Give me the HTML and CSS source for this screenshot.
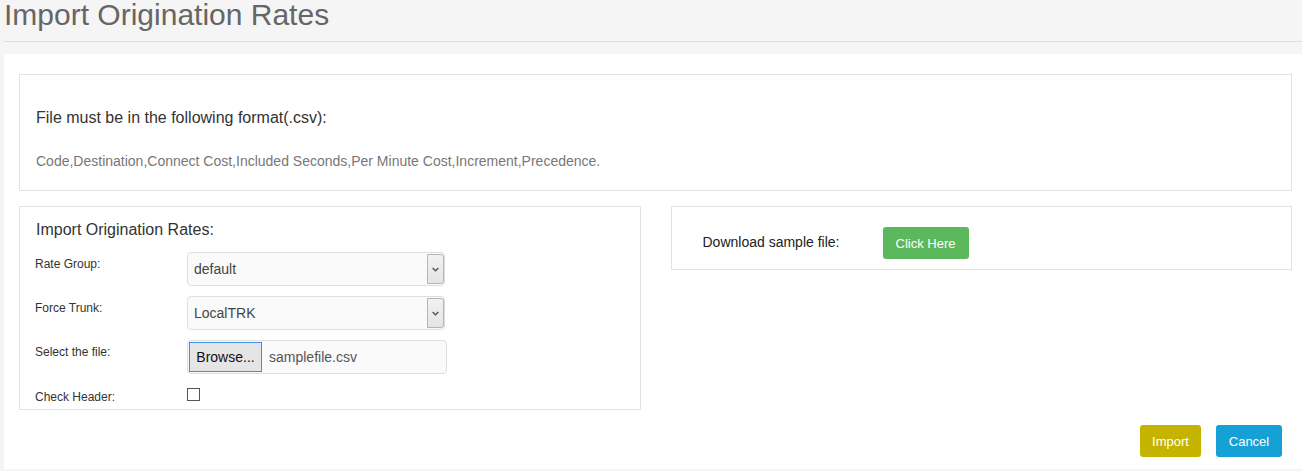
FILE: index.html
```html
<!DOCTYPE html>
<html>
<head>
<meta charset="utf-8">
<title>Import Origination Rates</title>
<link rel="stylesheet" href="styles.css">
</head>
<body>
<div class="header">
  <h1 class="page-title">Import Origination Rates</h1>
</div>
<div class="panel">
  <div class="box format-box">
    <h4 class="box-title">File must be in the following format(.csv):</h4>
    <p class="format-text">Code,Destination,Connect Cost,Included Seconds,Per Minute Cost,Increment,Precedence.</p>
  </div>
  <div class="columns">
    <div class="box form-box">
      <h4 class="form-title">Import Origination Rates:</h4>
      <div class="row">
        <label class="row-label">Rate Group:</label>
        <div class="select">
          <span class="select-value">default</span>
          <span class="select-arrow"><svg width="7" height="5" viewBox="0 0 7 5"><path d="M0.6 0.9 L3.5 3.8 L6.4 0.9" fill="none" stroke="#555" stroke-width="1.4"/></svg></span>
        </div>
      </div>
      <div class="row">
        <label class="row-label">Force Trunk:</label>
        <div class="select">
          <span class="select-value">LocalTRK</span>
          <span class="select-arrow"><svg width="7" height="5" viewBox="0 0 7 5"><path d="M0.6 0.9 L3.5 3.8 L6.4 0.9" fill="none" stroke="#555" stroke-width="1.4"/></svg></span>
        </div>
      </div>
      <div class="row">
        <label class="row-label">Select the file:</label>
        <div class="file-input">
          <span class="browse-btn">Browse...</span>
          <span class="file-name">samplefile.csv</span>
        </div>
      </div>
      <div class="row row-check">
        <label class="row-label">Check Header:</label>
        <span class="checkbox"></span>
      </div>
    </div>
    <div class="box download-box">
      <span class="download-label">Download sample file:</span>
      <span class="btn btn-green">Click Here</span>
    </div>
  </div>
  <div class="actions">
    <span class="btn btn-import">Import</span>
    <span class="btn btn-cancel">Cancel</span>
  </div>
</div>
</body>
</html>
```
FILE: styles.css
```css
html, body {
  margin: 0;
  padding: 0;
}
body {
  background: #f5f5f5;
  font-family: "Liberation Sans", Arial, sans-serif;
  color: #333;
  height: 471px;
  overflow: hidden;
}
.header {
  margin-left: 4px;
  height: 41px;
  border-bottom: 1px solid #dcdcdc;
}
.page-title {
  margin: 0;
  padding-top: 1px;
  font-size: 30px;
  line-height: 28px;
  font-weight: normal;
  color: #666;
}
.panel {
  margin: 12px 0 0 4px;
  background: #fff;
  height: 415px;
  box-sizing: border-box;
  padding: 20px 10px 0 15px;
}
.box {
  border: 1px solid #e3e3e3;
  background: #fff;
}
.format-box {
  padding: 33px 16px 19px 16px;
}
.box-title {
  margin: 0;
  font-size: 16px;
  line-height: 20px;
  font-weight: normal;
  color: #333;
}
.format-text {
  margin: 23px 0 0 0;
  font-size: 14px;
  line-height: 20px;
  color: #777;
}
.columns {
  display: grid;
  grid-template-columns: 1fr 1fr;
  column-gap: 30px;
  align-items: start;
  margin-top: 15px;
}
.form-box {
  padding: 13px 16px 5px 15px;
}
.form-title {
  margin: 0 0 12px 1px;
  font-size: 16px;
  line-height: 20px;
  font-weight: normal;
  color: #333;
}
.row {
  display: flex;
  align-items: flex-start;
  height: 34px;
  margin-bottom: 10px;
}
.row-check {
  height: 20px;
  margin-bottom: 0;
}
.row-label {
  width: 152px;
  flex: none;
  font-size: 12px;
  line-height: 16px;
  padding-top: 4px;
  color: #333;
}
.row-check .row-label {
  padding-top: 5px;
}
.select {
  width: 258px;
  height: 34px;
  box-sizing: border-box;
  border: 1px solid #dedede;
  border-radius: 4px;
  background: #fafafa;
  display: flex;
  align-items: center;
  justify-content: space-between;
  padding-left: 6px;
  padding-right: 0;
}
.select-value {
  font-size: 14px;
  color: #444;
}
.select-arrow {
  width: 17px;
  height: 30px;
  box-sizing: border-box;
  border: 1px solid #b5b5b5;
  border-radius: 0 3px 3px 0;
  background: linear-gradient(#f2f2f2, #e4e4e4);
  display: flex;
  align-items: center;
  justify-content: center;
}
.file-input {
  width: 260px;
  height: 34px;
  box-sizing: border-box;
  border: 1px solid #dedede;
  border-radius: 4px;
  background: #fafafa;
  display: flex;
  align-items: center;
  padding-left: 1px;
}
.browse-btn {
  width: 73px;
  height: 30px;
  box-sizing: border-box;
  border: 1px solid #3d8ee6;
  background: #e5e5e5;
  font-size: 14px;
  color: #111;
  display: flex;
  align-items: center;
  justify-content: center;
  white-space: nowrap;
  overflow: hidden;
}
.file-name {
  margin-left: 7px;
  font-size: 14px;
  color: #555;
}
.checkbox {
  width: 13px;
  height: 13px;
  box-sizing: border-box;
  border: 1px solid #555;
  background: #fff;
  margin-top: 4px;
}
.download-box {
  display: flex;
  align-items: flex-start;
  padding: 20px 16px 10px 31px;
}
.download-label {
  width: 180px;
  flex: none;
  font-size: 14px;
  line-height: 20px;
  padding-top: 5px;
  color: #222;
}
.btn {
  display: inline-flex;
  align-items: center;
  justify-content: center;
  height: 32px;
  box-sizing: border-box;
  padding: 0 12px;
  border-radius: 3px;
  font-size: 13px;
  color: #fff;
}
.btn-green {
  width: 86px;
  background: #5cb85c;
}
.actions {
  display: flex;
  justify-content: flex-end;
  gap: 15px;
  margin-top: 15px;
  padding-right: 10px;
}
.btn-import {
  width: 61px;
  background: #c4b400;
}
.btn-cancel {
  width: 66px;
  background: #15a1d6;
}
```
